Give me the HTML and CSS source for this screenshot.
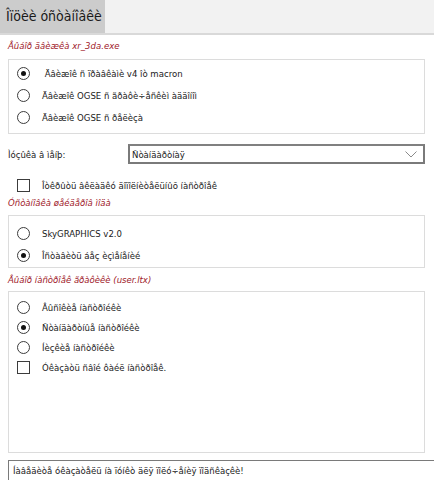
FILE: index.html
```html
<!DOCTYPE html>
<html>
<head>
<meta charset="utf-8">
<link rel="stylesheet" href="styles.css">
</head>
<body>
<div class="tabbar">
  <div class="tab">Îïöèè óñòàíîâêè</div>
</div>
<div class="content">
  <div class="legend l1">Âûáîð äâèæêà xr_3da.exe</div>
  <div class="group g1">
    <div class="row"><span class="radio on"></span><span class="txt">&nbsp;Äâèæîê ñ ïðàâêàìè v4 îò macron</span></div>
    <div class="row"><span class="radio"></span><span class="txt">Äâèæîê OGSE ñ ãðàôè÷åñêèì àääîíîì</span></div>
    <div class="row"><span class="radio"></span><span class="txt">Äâèæîê OGSE ñ ðåëèçà</span></div>
  </div>
  <div class="field">
    <span class="flabel">Ìóçûêà â ìåíþ:</span>
    <div class="select">
      <span>Ñòàíäàðòíàÿ</span>
      <svg class="chev" width="12" height="7" viewBox="0 0 12 7"><path d="M0.5 0.5 L6 6 L11.5 0.5" fill="none" stroke="#8a8a8a" stroke-width="1"/></svg>
    </div>
  </div>
  <div class="row check-row"><span class="check"></span><span class="txt">Îòêðûòü âêëàäêó äîïîëíèòåëüíûõ íàñòðîåê</span></div>
  <div class="legend l2">Óñòàíîâêà øåéäåðîâ ìîäà</div>
  <div class="group g2">
    <div class="row"><span class="radio"></span><span class="txt">SkyGRAPHICS v2.0</span></div>
    <div class="row"><span class="radio on"></span><span class="txt">Îñòàâèòü áåç èçìåíåíèé</span></div>
  </div>
  <div class="legend l3">Âûáîð íàñòðîåê ãðàôèêè (user.ltx)</div>
  <div class="group g3">
    <div class="row"><span class="radio"></span><span class="txt">Âûñîêèå íàñòðîéêè</span></div>
    <div class="row"><span class="radio on"></span><span class="txt">Ñòàíäàðòíûå íàñòðîéêè</span></div>
    <div class="row"><span class="radio"></span><span class="txt">Íèçêèå íàñòðîéêè</span></div>
    <div class="row"><span class="check"></span><span class="txt">Óêàçàòü ñâîé ôàéë íàñòðîåê.</span></div>
  </div>
</div>
<div class="status">Íàâåäèòå óêàçàòåëü íà ïóíêò äëÿ ïîëó÷åíèÿ ïîäñêàçêè!</div>
</body>
</html>
```
FILE: styles.css
```css
html, body {
  margin: 0;
  padding: 0;
  background: #ffffff;
  overflow: hidden;
}
body {
  width: 434px;
  height: 480px;
  font-family: "DejaVu Sans Condensed", "DejaVu Sans", sans-serif;
  font-size: 9.5px;
  color: #1a1a1a;
}
.tabbar {
  height: 33px;
  background: #f2f2f2;
  border-bottom: 2px solid #d9d9d9;
  display: flex;
}
.tab {
  width: 105px;
  background: #cccccc;
  font-family: "DejaVu Sans Condensed", "DejaVu Sans", sans-serif;
  font-size: 14px;
  line-height: 33px;
  padding-left: 6px;
  box-sizing: border-box;
  color: #1a1a1a;
}
.content {
  padding: 0 9px 0 8px;
  display: flex;
  flex-direction: column;
}
.legend {
  color: #a0202a;
  font-style: italic;
  height: 14px;
  line-height: 14px;
}
.l1 { margin-top: 4px; }
.l2 { margin-top: 4px; }
.l3 { margin-top: 5px; }
.group {
  border: 1px solid #dcdcdc;
  display: flex;
  flex-direction: column;
  padding-left: 8px;
  box-sizing: border-box;
}
.g1 { margin-top: 6px; height: 75px; padding-top: 6px; gap: 8px; }
.g2 { margin-top: 5px; height: 53px; padding-top: 10px; gap: 8px; }
.g3 { margin-top: 4px; height: 162px; padding-top: 8px; gap: 6px; }
.row {
  display: flex;
  align-items: center;
  height: 14px;
}
.txt {
  margin-left: 12px;
  white-space: nowrap;
}
.radio {
  width: 11px;
  height: 11px;
  border: 1px solid #3c3c3c;
  border-radius: 50%;
  background: #fff;
  position: relative;
  flex: none;
}
.radio.on::after {
  content: "";
  position: absolute;
  left: 3px;
  top: 3px;
  width: 5px;
  height: 5px;
  border-radius: 50%;
  background: #111;
}
.check {
  width: 11px;
  height: 11px;
  border: 1px solid #3c3c3c;
  background: #fff;
  flex: none;
}
.field {
  display: flex;
  align-items: center;
  margin-top: 10px;
  height: 20px;
}
.flabel {
  width: 120px;
  flex: none;
}
.select {
  flex: 1;
  height: 20px;
  box-sizing: border-box;
  border: 2px solid #7a7a7a;
  border-top-color: #808080;
  display: flex;
  align-items: center;
  justify-content: space-between;
  padding: 0 6px 0 2px;
}
.check-row {
  margin-top: 14px;
  padding-left: 9px;
}
.status {
  margin: 7px 0 0 8px;
  width: 440px;
  height: 22px;
  box-sizing: border-box;
  border: 1px solid #7a7a7a;
  border-right: none;
  padding: 3px 4px;
  line-height: 14px;
}
```
